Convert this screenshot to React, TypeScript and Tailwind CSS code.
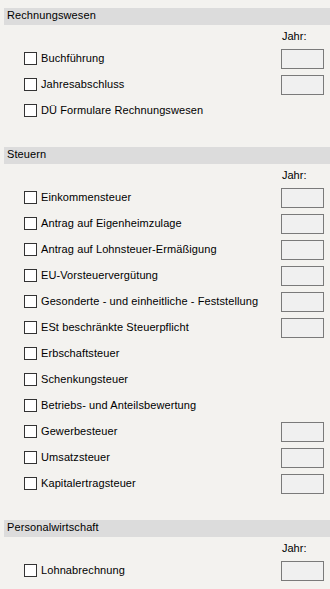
import React from "react";

type Item = { label: string; year: boolean };

const sections: { title: string; items: Item[] }[] = [
  {
    title: "Rechnungswesen",
    items: [
      { label: "Buchführung", year: true },
      { label: "Jahresabschluss", year: true },
      { label: "DÜ Formulare Rechnungswesen", year: false },
    ],
  },
  {
    title: "Steuern",
    items: [
      { label: "Einkommensteuer", year: true },
      { label: "Antrag auf Eigenheimzulage", year: true },
      { label: "Antrag auf Lohnsteuer-Ermäßigung", year: true },
      { label: "EU-Vorsteuervergütung", year: true },
      { label: "Gesonderte - und einheitliche - Feststellung", year: true },
      { label: "ESt beschränkte Steuerpflicht", year: true },
      { label: "Erbschaftsteuer", year: false },
      { label: "Schenkungsteuer", year: false },
      { label: "Betriebs- und Anteilsbewertung", year: false },
      { label: "Gewerbesteuer", year: true },
      { label: "Umsatzsteuer", year: true },
      { label: "Kapitalertragsteuer", year: true },
    ],
  },
  {
    title: "Personalwirtschaft",
    items: [{ label: "Lohnabrechnung", year: true }],
  },
];

function Row({ item }: { item: Item }) {
  return (
    <div className="flex h-[20px] mb-[6px] items-start">
      <div className="flex items-center h-[13px] mt-[3px] ml-[24px]">
        <div className="w-[13px] h-[13px] border border-[#333333] bg-white shrink-0" />
        <span className="ml-[4px] leading-[13px] whitespace-nowrap tracking-[0.1px]">{item.label}</span>
      </div>
      <div className="flex-1" />
      {item.year && (
        <div className="w-[43px] h-[20px] border border-[#7a7a7a] bg-[#f0f0f0] mr-[6px] shrink-0" />
      )}
    </div>
  );
}

export default function App() {
  return (
    <div
      className="w-[330px] h-[589px] overflow-hidden bg-[#f3f2ef] text-[11px] text-black pt-[8px]"
      style={{ fontFamily: '"Liberation Sans", Arial, sans-serif' }}
    >
      {sections.map((s) => (
        <div key={s.title} className="pb-[20px]">
          <div className="ml-[4px] h-[17px] bg-[#dcdcdc] pt-[1px] pl-[3px] leading-[13px] tracking-[0.1px]">
            {s.title}
          </div>
          <div className="flex justify-end mt-[5px] mb-[6px] h-[13px]">
            <div className="w-[43px] mr-[6px] pl-[1px] leading-[13px]">Jahr:</div>
          </div>
          {s.items.map((it) => (
            <Row key={it.label} item={it} />
          ))}
        </div>
      ))}
    </div>
  );
}
